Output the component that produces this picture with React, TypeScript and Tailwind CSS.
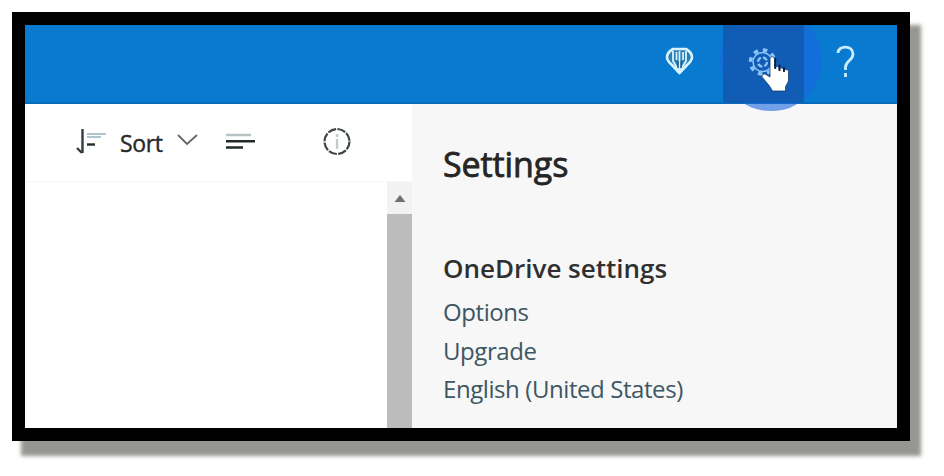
import type { ReactNode } from "react";

const font = "font-['Open_Sans','Noto_Sans',sans-serif]";

function PremiumIcon() {
  return (
    <svg width="30" height="34" viewBox="0 0 30 34" fill="none" stroke="#d9f4ff" strokeLinejoin="round">
      <path d="M8 4h13q6 3 6 9-1 4-5 7l-7.500 8L7 20q-4-3-5-7 0-6 6-9z" fill="#2c7fb4" strokeWidth="2.600" />
      <path d="M8 6v10l5.500 9M21 6v10l-5.500 9" strokeWidth="1.800" />
      <path d="M14.500 6v21M11.500 7v8M18 7v8" strokeWidth="1.700" />
      <path d="M13 16v7M16.200 16v7" stroke="#12527f" strokeWidth="1.200" />
    </svg>
  );
}

function GearIcon() {
  return (
    <svg width="30" height="30" viewBox="0 0 30 30" fill="none" stroke="#8cc6f8">
      <circle cx="14.500" cy="15" r="12" strokeWidth="3.600" strokeDasharray="4.500 4.920" />
      <circle cx="14.500" cy="15" r="9.500" strokeWidth="1.500" />
      <circle cx="14.500" cy="15" r="4.500" strokeWidth="2.200" strokeDasharray="5 2" />
    </svg>
  );
}

function HandCursor() {
  return (
    <svg width="32" height="38" viewBox="0 0 32 38">
      <path
        d="M10 4c0-3 4.500-3 4.500 0v9c0-2 4.500-2 4.500 0v1.500c0-2 4.500-2 4.500 0V16c0-2 5-2 5 .5v8c0 3-2 5-3 7v4.500H12.500l-3-5-7-8.500c-1.500-2 1-4.500 3.500-3l4 2.500z"
        fill="#fff"
        stroke="#123d70"
        strokeWidth="0.800"
      />
      <path d="M15.300 3v11M19.500 9.500V16M24 12v5" stroke="#0a2038" strokeWidth="1.800" />
    </svg>
  );
}

function SettingLink({ children }: { children: ReactNode }) {
  return (
    <a className="block h-[38.500px] whitespace-nowrap text-[24px] leading-[37px] tracking-[-0.420px] text-[#3d5663]">
      {children}
    </a>
  );
}

export default function App() {
  return (
    <div className={`h-[476px] w-[944px] overflow-hidden bg-white pl-3 pt-3 ${font}`}>
      <div className="flex h-[429px] w-[898px] flex-col border-[13px] border-black bg-white shadow-[10px_14px_4px_1px_#969692]">
        <header className="relative flex h-[79px] shrink-0 border-b-2 border-[#086db9] bg-[#087bd0] pl-[629px]">
          <div className="flex w-[69px] items-start pl-[11px] pt-[20px]">
            <PremiumIcon />
          </div>
          <div className="relative h-[78px] w-[81px] bg-[#115cb3] pl-[25px] pt-[22px]">
            <div className="absolute -left-[3px] -top-[14px] h-[100px] w-[102px] rounded-full bg-[#1a66e0]/60 [clip-path:inset(14px_0_0_0)]" />
            <div className="absolute left-0 top-0 h-full w-full bg-[#115cb3]/90" />
            <div className="relative">
              <GearIcon />
            </div>
            <div className="absolute left-[37px] top-[30px]">
              <HandCursor />
            </div>
          </div>
          <svg className="ml-[31px] mt-[19px]" width="22" height="35" viewBox="0 0 22 35" fill="none" stroke="#c9edff" strokeWidth="2.800">
            <path d="M3 9c0-8 15-8 15 1 0 6.500-7.500 7-7.500 13v3M10.500 29v4" />
          </svg>
        </header>
        <div className="flex min-h-0 flex-1">
          <main className="flex w-[387px] flex-col bg-white">
            <div className="flex h-[78px] shrink-0 border-b border-[#fbf5f5] text-[#292929]">
              <svg className="ml-[51px] mt-[22px]" width="32" height="32" viewBox="0 0 32 32" fill="none">
                <path d="M6.500 3v24M1 22l5 5" stroke="#353c3d" strokeWidth="2.400" />
                <path d="M11 8h19M11 11h14" stroke="#afc4cc" strokeWidth="2.200" />
                <path d="M11 18.500h8" stroke="#252d2e" strokeWidth="2.400" />
              </svg>
              <span className="ml-[12px] mt-[21px] w-[45px] whitespace-nowrap text-[23px] leading-[36px] tracking-[-0.400px] [-webkit-text-stroke:0.400px_#292929]">Sort</span>
              <svg className="ml-[11px] mt-[28px]" width="24" height="16" viewBox="0 0 24 16" fill="none" stroke="#666" strokeWidth="1.800">
                <path d="m2 3 9 9 10-9" />
              </svg>
              <svg className="ml-[25px] mt-[24px]" width="32" height="25" viewBox="0 0 32 25" fill="none">
                <path d="M1 7h25" stroke="#b6c3c5" strokeWidth="2.500" />
                <path d="M1 13.300h29M1 19.500h17" stroke="#222b2c" strokeWidth="2.500" />
              </svg>
              <svg className="ml-[65px] mt-[22px]" width="32" height="32" viewBox="0 0 32 32" fill="none">
                <circle cx="15" cy="15.500" r="12.500" stroke="#3d4546" strokeWidth="2.200" strokeDasharray="8.500 1.317" />
                <path d="M15 8v3M15 13v10" stroke="#c2cbcb" strokeWidth="2.400" />
              </svg>
            </div>
            <div className="ml-[362px] flex min-h-0 w-[25px] flex-1 flex-col bg-[#bcbcbc]">
              <div className="flex h-[32px] justify-center bg-[#f2f2f2] pt-[13px]">
                <svg width="12" height="8" viewBox="0 0 12 8" fill="#707070">
                  <path d="m6 0 5.500 7H.5z" />
                </svg>
              </div>
            </div>
          </main>
          <aside className="flex-1 bg-[#f6f7f6] pl-[31px] pt-[37px]">
            <h1 className="h-[46px] whitespace-nowrap text-[34px] leading-[46px] tracking-[-0.100px] text-[#252525] [-webkit-text-stroke:0.800px_#252525]">Settings</h1>
            <h2 className="mt-[63px] h-[36px] whitespace-nowrap text-[26px] font-semibold leading-[36px] tracking-[0px] text-[#303030]">OneDrive settings</h2>
            <nav className="mt-[7px]">
              <SettingLink>Options</SettingLink>
              <SettingLink>Upgrade</SettingLink>
              <SettingLink>English (United States)</SettingLink>
            </nav>
          </aside>
        </div>
      </div>
    </div>
  );
}
